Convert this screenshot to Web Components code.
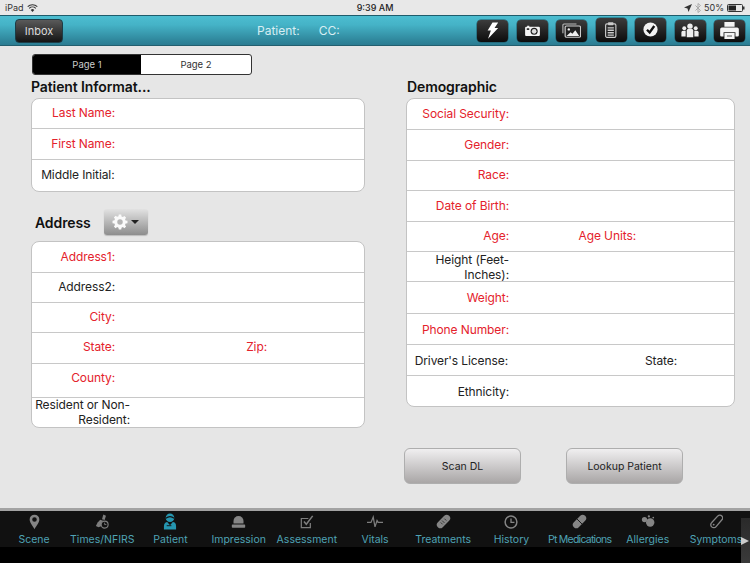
<!DOCTYPE html>
<html>
<head>
<meta charset="utf-8">
<title>Patient</title>
<style>
    html, body { margin: 0; padding: 0; width: 750px; height: 563px; overflow: hidden; background: #e6e6e6; font-family: Inter, "Liberation Sans", sans-serif; }
</style>
</head>
<body>
<patient-screen></patient-screen>
<script>
const ICONS = {
    bolt: `<svg width="13" height="19" viewBox="0 0 16 21"><path fill="#fff" d="M8 0.500h7L10.500 7.500H15L2.500 20.500 6 10.500H2z"/></svg>`,
    camera: `<svg width="15" height="11.500" viewBox="0 0 18 14"><path fill="#f4f4f4" d="M1.500 2h1V.8h2.600V2h11.400A1.500 1.500 0 0 1 18 3.500v8.500a1.500 1.500 0 0 1-1.500 1.500h-15A1.500 1.500 0 0 1 0 12V3.500A1.500 1.500 0 0 1 1.500 2z"/><circle cx="11" cy="7.700" r="4.300" fill="#222"/><circle cx="11" cy="7.700" r="2.800" fill="#ddd"/><rect x="2" y="4" width="3" height="2" fill="#222"/></svg>`,
    photos: `<svg width="19" height="15" viewBox="0 0 21 16"><path fill="none" stroke="#bbb" stroke-width="1.200" d="M1 11V2a1.200 1.200 0 0 1 1.200-1.200H16"/><rect x="3.500" y="3" width="17" height="12.500" rx="1.500" fill="#222" stroke="#ccc" stroke-width="1.300"/><circle cx="7.500" cy="6.800" r="1.300" fill="#eee"/><path fill="#eee" d="M5 14l4.500-4 2 1.600 3.200-4 4.300 6.400z"/></svg>`,
    clip: `<svg width="11.500" height="16" viewBox="0 0 13 18"><rect x="0.700" y="2" width="11.600" height="15.300" rx="1.500" fill="none" stroke="#ccc" stroke-width="1.300"/><rect x="3.500" y="0.300" width="6" height="3.200" rx=".6" fill="#ccc"/><path stroke="#ccc" stroke-width="1.500" d="M3 6.500h7M3 9.300h7M3 12.100h7M3 14.800h7"/></svg>`,
    check: `<svg width="15" height="15" viewBox="0 0 18 18"><circle cx="9" cy="9" r="8.500" fill="#f2f2f2"/><path fill="none" stroke="#111" stroke-width="2.800" d="M4.800 9.300l3.200 3.300 5.500-7.800"/></svg>`,
    people: `<svg width="18" height="14.500" viewBox="0 0 22 17"><g fill="#eee"><circle cx="11" cy="3.500" r="3.300"/><path d="M7 8.500a2 2 0 0 1 2-1.500h4a2 2 0 0 1 2 1.500V17H7z"/><circle cx="4" cy="6" r="2.400"/><path d="M0.500 11a2 2 0 0 1 2-2h3.200V16H.5z"/><circle cx="18" cy="6" r="2.400"/><path d="M21.500 11a2 2 0 0 0-2-2h-3.200V16h5.200z"/></g></svg>`,
    printer: `<svg width="19" height="17" viewBox="0 0 22 20"><g fill="#f4f4f4"><path d="M5 0h12v5.500H5z"/><path d="M2 6.500h18A2 2 0 0 1 22 8.500v7a1.500 1.500 0 0 1-1.500 1.500H18v-5H4v5H1.500A1.500 1.500 0 0 1 0 15.500v-7a2 2 0 0 1 2-2z"/><path d="M5 13h12v7H5z"/></g><path stroke="#333" stroke-width="1" d="M8 16.500h6"/></svg>`,
    gear: `<svg width="16" height="16" viewBox="0 0 21 21"><path fill="#fafafa" d="M8.900.8h3.200l.4 2.500 1.700.7 2.100-1.400 2.200 2.200-1.400 2.100.7 1.700 2.500.4v3.200l-2.500.4-.7 1.700 1.400 2.100-2.200 2.200-2.100-1.400-1.700.7-.4 2.500H8.900l-.4-2.500-1.700-.7-2.100 1.400-2.200-2.200 1.400-2.100-.7-1.700-2.500-.4V8.700l2.500-.4.7-1.700L2.500 4.500l2.200-2.200 2.100 1.400 1.700-.7z"/><circle cx="10.500" cy="10.500" r="3.600" fill="#b5b5b5"/></svg>`,
    pin: `<svg width="11" height="16" viewBox="0 0 12 17"><path fill="#848484" fill-rule="evenodd" d="M6 .5a5.300 5.300 0 0 1 5.300 5.300C11.300 9.500 7.500 13 6 16.500 4.500 13 .7 9.500.7 5.800A5.300 5.300 0 0 1 6 .5zm0 2.800a2.500 2.500 0 1 0 0 5 2.500 2.500 0 0 0 0-5z"/></svg>`,
    times: `<svg width="14" height="15" viewBox="0 0 16 17"><g fill="#7d7d7d"><path d="M9.500 0.500l3 1.300-1.500 5-3-1z"/><path d="M6 6.500l4 1.500-2 5.500-4 1.500-3-1.500 2-4z"/></g><circle cx="11" cy="12" r="4" fill="#111" stroke="#7d7d7d" stroke-width="1.300"/><path stroke="#7d7d7d" stroke-width="1" fill="none" d="M11 9.800V12h2"/></svg>`,
    patient: `<svg width="14" height="17" viewBox="0 0 15 18"><circle cx="7.500" cy="5" r="4.600" fill="#2596b0"/><path fill="none" stroke="#111" stroke-width="1.100" d="M3 5.500q4.500-3.500 9 0"/><path fill="#2596b0" d="M1 14c0-3 2-4.500 3.500-4.500L7.500 13l3-3.500C12.500 9.500 14 11 14 14v3.500H1z"/><path fill="none" stroke="#111" stroke-width="1" d="M4 13.500h5"/></svg>`,
    siren: `<svg width="15" height="15" viewBox="0 0 18 17"><path fill="#858585" d="M3 11V8a6 6 0 0 1 12 0v3z"/><rect x="1" y="12" width="16" height="4" rx=".8" fill="#858585"/></svg>`,
    assess: `<svg width="14" height="14" viewBox="0 0 16 16"><path fill="none" stroke="#7d7d7d" stroke-width="1.400" d="M11.800 9v5.300H1.500V4h8"/><path fill="none" stroke="#7d7d7d" stroke-width="1.800" d="M4.500 7.500l2.700 3L14.500 1"/></svg>`,
    pulse: `<svg width="16" height="13" viewBox="0 0 18 14"><path fill="none" stroke="#7d7d7d" stroke-width="1.400" d="M0 8h4.500L7 2l2 11 2.300-7 1.200 2H18"/></svg>`,
    bandage: `<svg width="15" height="15" viewBox="0 0 16 16"><rect x="-0.500" y="4.300" width="17" height="7.400" rx="3.700" transform="rotate(-45 8 8)" fill="#858585"/><path stroke="#111" stroke-width=".7" d="M6.500 7l2.500 2.500M5 9l2 2M9 5l2 2"/></svg>`,
    clock: `<svg width="14" height="14" viewBox="0 0 15 15"><circle cx="7.500" cy="7.500" r="6.300" fill="none" stroke="#858585" stroke-width="1.600"/><path fill="none" stroke="#858585" stroke-width="1.400" d="M7.500 3.800v4h3.700"/></svg>`,
    pill: `<svg width="15" height="15" viewBox="0 0 16 16"><rect x="-0.500" y="4.300" width="17" height="7.400" rx="3.700" transform="rotate(-45 8 8)" fill="#858585"/><path stroke="#111" stroke-width="1" d="M5.400 5.400l5.200 5.200"/></svg>`,
    allergy: `<svg width="14" height="12.500" viewBox="0 0 16 14"><g fill="#858585"><circle cx="10.500" cy="8.500" r="4.800"/><circle cx="4" cy="5" r="3"/><circle cx="9" cy="1.500" r="1.300"/><circle cx="14" cy="2.800" r="1"/></g></svg>`,
    thermo: `<svg width="14" height="15" viewBox="0 0 15 16"><path fill="none" stroke="#858585" stroke-width="1.400" d="M9.500 2l-6.500 7a3.200 3.200 0 1 0 4.600 4.400l6-7A3 3 0 0 0 9.500 2z"/><circle cx="5" cy="11.300" r="1" fill="#858585"/></svg>`
};

class AppIcon extends HTMLElement {
    connectedCallback() {
        if (this.shadowRoot) return;
        this.attachShadow({ mode: 'open' }).innerHTML = `
            <style>
                :host { display: inline-flex; align-items: center; justify-content: center; }
                svg { display: block; }
            </style>
            ${ICONS[this.getAttribute('name')] || ''}`;
    }
}

const statusTemplate = document.createElement('template');
statusTemplate.innerHTML = `
    <style>
        :host {
            display: flex;
            align-items: center;
            justify-content: space-between;
            height: 15px;
            padding: 0 5px;
            box-sizing: border-box;
            font-size: 9px;
            color: #333;
            background: #e8e8e8;
        }
        .side { display: flex; align-items: center; gap: 3px; }
        .time { flex: 1; text-align: center; font-weight: 500; color: #222; }
        .side.left, .side.right { width: 120px; }
        .side.right { justify-content: flex-end; }
        svg { display: block; }
    </style>
    <div class="side left">
        <span>iPad</span>
        <svg width="11" height="8" viewBox="0 0 11 8"><path fill="none" stroke="#333" stroke-width="1.100" d="M.7 2.700a7 7 0 0 1 9.600 0M2.200 4.300a4.800 4.800 0 0 1 6.600 0"/><path fill="#333" d="M5.500 8L3.700 5.900a2.600 2.600 0 0 1 3.600 0z"/></svg>
    </div>
    <div class="time">9:39 AM</div>
    <div class="side right">
        <svg width="8" height="8" viewBox="0 0 8 8"><path fill="#333" d="M8 0L4.500 8 3.500 4.500 0 3.500z"/></svg>
        <svg width="6" height="10" viewBox="0 0 6 10"><path fill="none" stroke="#aaa" d="M.5 2.500l5 5L3 9.500V.5l2.500 2-5 5"/></svg>
        <span>50%</span>
        <svg width="18" height="8" viewBox="0 0 18 8"><rect x=".5" y=".5" width="15" height="7" rx="1" fill="none" stroke="#333"/><rect x="1.500" y="1.500" width="7.500" height="5" fill="#222"/><rect x="16" y="2.500" width="1.500" height="3" fill="#333"/></svg>
    </div>
`;
class StatusBar extends HTMLElement {
    constructor() {
        super();
        this.attachShadow({ mode: 'open' }).appendChild(statusTemplate.content.cloneNode(true));
    }
}

const navTemplate = document.createElement('template');
navTemplate.innerHTML = `
    <style>
        :host {
            display: flex;
            align-items: center;
            height: 31px;
            box-sizing: border-box;
            padding: 0 5px 0 15px;
            background: linear-gradient(#4cbdd0, #45b3c7 30%, #2f869b 85%, #2b7c92);
            border-top: 1px solid #1f5c6b;
            border-bottom: 1px solid #235f6f;
        }
        .inbox {
            width: 48px;
            height: 24px;
            box-sizing: border-box;
            display: flex;
            align-items: center;
            justify-content: center;
            border-radius: 4px;
            background: linear-gradient(#5a5a5a, #141414);
            border: 1px solid #1c3c46;
            color: #dcdcdc;
            font-size: 11px;
        }
        .info {
            margin-left: 194px;
            display: flex;
            gap: 19px;
            color: #d8eef3;
            font-size: 12px;
        }
        .tools { margin-left: auto; display: flex; align-items: center; gap: 8.500px; }
    </style>
    <div class="inbox">Inbox</div>
    <div class="info"><span>Patient:</span><span>CC:</span></div>
    <div class="tools"><slot></slot></div>
`;
class NavBar extends HTMLElement {
    constructor() {
        super();
        this.attachShadow({ mode: 'open' }).appendChild(navTemplate.content.cloneNode(true));
    }
}

class ToolButton extends HTMLElement {
    connectedCallback() {
        if (this.shadowRoot) return;
        this.attachShadow({ mode: 'open' }).innerHTML = `
            <style>
                :host {
                    display: flex;
                    align-items: center;
                    justify-content: center;
                    width: 31px;
                    height: 22px;
                    border-radius: 4px;
                    background: linear-gradient(#3c3c3c, #0c0c0c);
                    box-shadow: 0 0 0 .5px #1d5261;
                    overflow: hidden;
                }
                :host([tall]) { height: 24px; margin-top: -2px; }
            </style>
            <app-icon name="${this.getAttribute('icon')}"></app-icon>`;
    }
}

const segTemplate = document.createElement('template');
segTemplate.innerHTML = `
    <style>
        :host {
            display: flex;
            width: 220px;
            height: 21px;
            box-sizing: border-box;
            border: 1px solid #333;
            border-radius: 3px;
            overflow: hidden;
            font-size: 9.500px;
            background: #fff;
        }
        div { display: flex; align-items: center; justify-content: center; }
        .on { width: 108px; background: #000; color: #ccc; }
        .off { flex: 1; color: #333; }
    </style>
    <div class="on">Page 1</div>
    <div class="off">Page 2</div>
`;
class SegControl extends HTMLElement {
    constructor() {
        super();
        this.attachShadow({ mode: 'open' }).appendChild(segTemplate.content.cloneNode(true));
    }
}

class FormCard extends HTMLElement {
    constructor() {
        super();
        this.attachShadow({ mode: 'open' }).innerHTML = `
            <style>
                :host {
                    display: block;
                    box-sizing: border-box;
                    background: #fff;
                    border: 1px solid #c3c3c3;
                    border-radius: 8px;
                    overflow: hidden;
                }
            </style>
            <slot></slot>`;
    }
}

class FormRow extends HTMLElement {
    connectedCallback() {
        if (this.shadowRoot) return;
        const width = this.getAttribute('width');
        const second = this.getAttribute('second');
        const h = this.getAttribute('h') || 30;
        const lift = this.getAttribute('lift') || 0;
        const drop = this.getAttribute('drop') || 0;
        const red = this.hasAttribute('red') ? 'red' : '';
        const red2 = this.hasAttribute('red2') ? 'red' : '';
        this.attachShadow({ mode: 'open' }).innerHTML = `
            <style>
                :host {
                    display: flex;
                    align-items: center;
                    box-sizing: border-box;
                    height: ${h}px;
                    padding: ${drop}px 0 ${lift}px;
                    border-bottom: 1px solid #c8c8c8;
                    font-size: 12px;
                    line-height: 14.500px;
                    letter-spacing: -0.1px;
                    color: #222;
                }
                :host([last]) { border-bottom: 0; }
                .label { text-align: right; box-sizing: border-box; flex: none; }
                .red { color: #e4222c; }
            </style>
            <div class="label ${red}" style="width:${width}px">${this.getAttribute('label')}</div>
            ${second ? `<div class="label ${red2}" style="width:${this.getAttribute('second-width')}px">${second}</div>` : ''}`;
    }
}

class GlossButton extends HTMLElement {
    constructor() {
        super();
        this.attachShadow({ mode: 'open' }).innerHTML = `
            <style>
                :host {
                    display: flex;
                    align-items: center;
                    justify-content: center;
                    width: 117px;
                    height: 36px;
                    box-sizing: border-box;
                    border: 1px solid #aeaeae;
                    border-radius: 6px;
                    background: linear-gradient(#f0eff0, #a9a6a6);
                    color: #222;
                    font-size: 10.500px;
                }
            </style>
            <slot></slot>`;
    }
}

class GearButton extends HTMLElement {
    constructor() {
        super();
        this.attachShadow({ mode: 'open' }).innerHTML = `
            <style>
                :host {
                    display: flex;
                    align-items: center;
                    width: 44px;
                    height: 26px;
                    box-sizing: border-box;
                    padding-left: 8px;
                    gap: 3px;
                    border-radius: 3px;
                    background: linear-gradient(#e2e2e2, #8d8d8d);
                    box-shadow: 0 1px 1px #bbb;
                }
                .caret { width: 0; height: 0; border: 4px solid transparent; border-top: 4px solid #222; border-bottom: 0; }
            </style>
            <app-icon name="gear"></app-icon>
            <div class="caret"></div>`;
    }
}

class TabItem extends HTMLElement {
    connectedCallback() {
        if (this.shadowRoot) return;
        const spacing = this.getAttribute('spacing') || 0;
        this.attachShadow({ mode: 'open' }).innerHTML = `
            <style>
                :host {
                    flex: 1 1 0;
                    min-width: 0;
                    display: flex;
                    flex-direction: column;
                    align-items: center;
                    color: #4fa3b5;
                    font-size: 10.500px;
                }
                .icon { height: 19px; display: flex; align-items: center; margin-top: 1px; }
                .text { white-space: nowrap; line-height: 14px; margin-top: 2px; letter-spacing: ${spacing}px; }
            </style>
            <div class="icon"><app-icon name="${this.getAttribute('icon')}"></app-icon></div>
            <div class="text">${this.getAttribute('label')}</div>`;
    }
}

const tabTemplate = document.createElement('template');
tabTemplate.innerHTML = `
    <style>
        :host {
            display: block;
            position: relative;
            height: 55px;
            background: #000;
            border-top: 3px solid #a3a3a3;
            box-sizing: border-box;
        }
        .tabs { display: flex; height: 36px; background: #111; }
        .more {
            position: absolute;
            right: 0;
            top: 7px;
            width: 9px;
            height: 45px;
            display: flex;
            align-items: center;
            background: linear-gradient(#2a2a2a, #3a3a3a);
        }
        .more i { display: block; width: 0; height: 0; border: 4.500px solid transparent; border-left: 8px solid #ccc; border-right: 0; }
    </style>
    <div class="tabs"><slot></slot></div>
    <div class="more"><i></i></div>
`;
class TabBar extends HTMLElement {
    constructor() {
        super();
        this.attachShadow({ mode: 'open' }).appendChild(tabTemplate.content.cloneNode(true));
    }
}

const screenTemplate = document.createElement('template');
screenTemplate.innerHTML = `
    <style>
        :host {
            display: flex;
            flex-direction: column;
            width: 750px;
            height: 563px;
            font-family: Inter, "Liberation Sans", sans-serif;
            background: #e6e6e6;
        }
        .content {
            flex: 1;
            display: grid;
            grid-template-columns: 334px 329px;
            column-gap: 41px;
            padding: 8px 0 0 31px;
            align-items: start;
        }
        .title {
            height: 23px;
            display: flex;
            align-items: center;
            font-size: 14px;
            font-weight: 600;
            letter-spacing: -0.1px;
            color: #111;
        }
        seg-control { margin-left: 1px; }
        .right { padding-top: 21px; }
        .right .title { padding-left: 1px; }
        .address { display: flex; align-items: center; height: 26px; margin: 17px 0 6px 4px; }
        .address .title { width: 69px; }
        .actions { display: flex; gap: 45px; margin: 41px 0 0 -2px; }
    </style>
    <status-bar></status-bar>
    <nav-bar>
        <tool-button icon="bolt"></tool-button>
        <tool-button icon="camera"></tool-button>
        <tool-button icon="photos"></tool-button>
        <tool-button icon="clip" tall></tool-button>
        <tool-button icon="check" tall></tool-button>
        <tool-button icon="people"></tool-button>
        <tool-button icon="printer"></tool-button>
    </nav-bar>
    <div class="content">
        <div class="left">
            <seg-control></seg-control>
            <div class="title">Patient Informat...</div>
            <form-card>
                <form-row red label="Last Name:" width="83" h="30"></form-row>
                <form-row red label="First Name:" width="83" h="31"></form-row>
                <form-row last label="Middle Initial:" width="82.500" h="31"></form-row>
            </form-card>
            <div class="address">
                <div class="title">Address</div>
                <gear-button></gear-button>
            </div>
            <form-card>
                <form-row red label="Address1:" width="83" h="31"></form-row>
                <form-row label="Address2:" width="83" h="30"></form-row>
                <form-row red label="City:" width="83" h="30"></form-row>
                <form-row red label="State:" width="83" h="31" lift="2" second="Zip:" second-width="152" red2></form-row>
                <form-row red label="County:" width="83" h="34" lift="4"></form-row>
                <form-row last label="Resident or Non-Resident:" width="98" h="29"></form-row>
            </form-card>
        </div>
        <div class="right">
            <div class="title">Demographic</div>
            <form-card>
                <form-row red label="Social Security:" width="102" h="31"></form-row>
                <form-row red label="Gender:" width="102" h="31"></form-row>
                <form-row red label="Race:" width="102" h="30"></form-row>
                <form-row red label="Date of Birth:" width="102" h="31"></form-row>
                <form-row red label="Age:" width="102" h="30" second="Age Units:" second-width="127" red2></form-row>
                <form-row label="Height (Feet-Inches):" width="102" h="30" drop="2"></form-row>
                <form-row red label="Weight:" width="102" h="32" drop="2"></form-row>
                <form-row red label="Phone Number:" width="102" h="31" drop="2"></form-row>
                <form-row label="Driver's License:" width="101" h="31" drop="2" second="State:" second-width="169"></form-row>
                <form-row last label="Ethnicity:" width="102" h="30" drop="3"></form-row>
            </form-card>
            <div class="actions">
                <gloss-button>Scan DL</gloss-button>
                <gloss-button>Lookup Patient</gloss-button>
            </div>
        </div>
    </div>
    <tab-bar>
        <tab-item icon="pin" label="Scene"></tab-item>
        <tab-item icon="times" label="Times/NFIRS"></tab-item>
        <tab-item icon="patient" label="Patient"></tab-item>
        <tab-item icon="siren" label="Impression"></tab-item>
        <tab-item icon="assess" label="Assessment"></tab-item>
        <tab-item icon="pulse" label="Vitals"></tab-item>
        <tab-item icon="bandage" label="Treatments"></tab-item>
        <tab-item icon="clock" label="History"></tab-item>
        <tab-item icon="pill" label="Pt Medications" spacing="-0.75"></tab-item>
        <tab-item icon="allergy" label="Allergies"></tab-item>
        <tab-item icon="thermo" label="Symptoms"></tab-item>
    </tab-bar>
`;
class PatientScreen extends HTMLElement {
    constructor() {
        super();
        this.attachShadow({ mode: 'open' }).appendChild(screenTemplate.content.cloneNode(true));
    }
}

customElements.define('app-icon', AppIcon);
customElements.define('status-bar', StatusBar);
customElements.define('nav-bar', NavBar);
customElements.define('tool-button', ToolButton);
customElements.define('seg-control', SegControl);
customElements.define('form-card', FormCard);
customElements.define('form-row', FormRow);
customElements.define('gloss-button', GlossButton);
customElements.define('gear-button', GearButton);
customElements.define('tab-item', TabItem);
customElements.define('tab-bar', TabBar);
customElements.define('patient-screen', PatientScreen);
</script>
</body>
</html>
